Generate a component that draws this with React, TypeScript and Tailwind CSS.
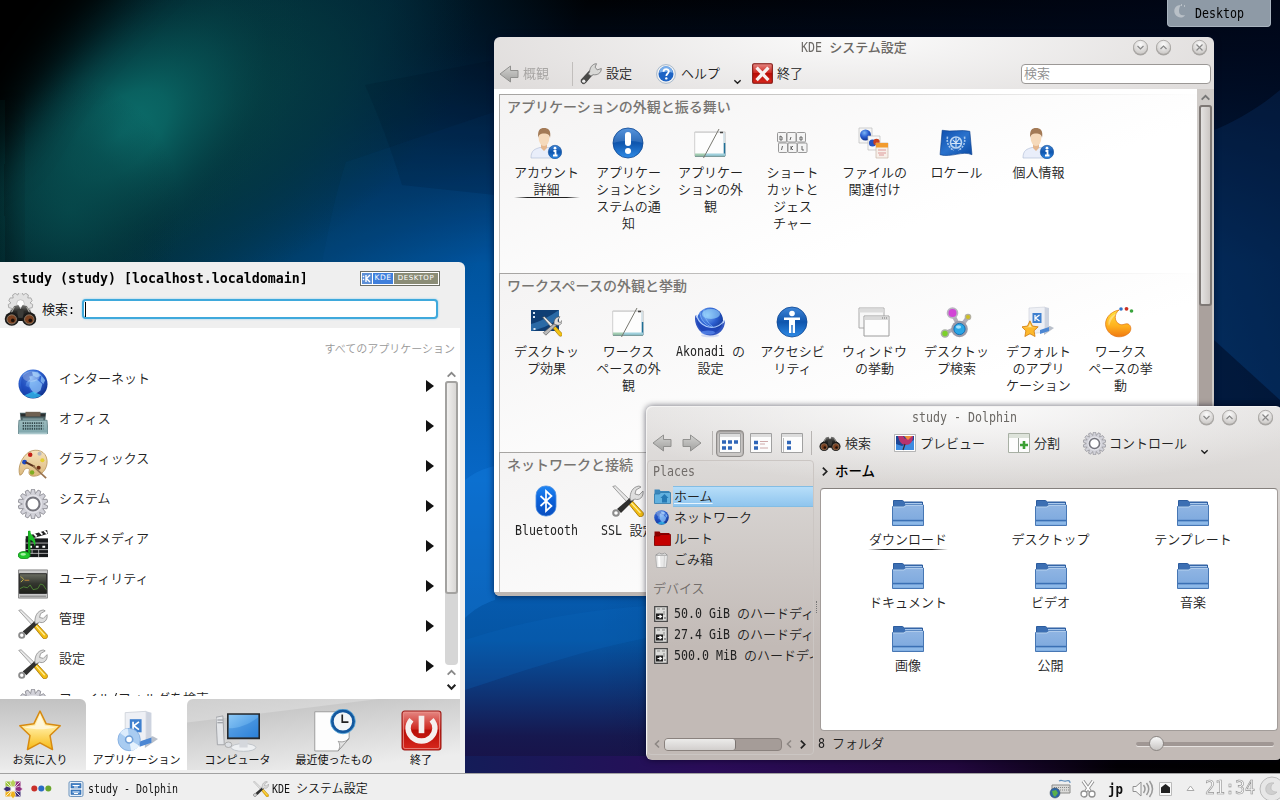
import React from "react";

/* ---------- text ---------- */

const MONO_RATIO = 0.602;

/** Mixed text: half-width runs are condensed to a fixed advance, the rest is left full-width. */
function T({ s, cell = 7, size = 13, className = "" }: { s: string; cell?: number; size?: number; className?: string }) {
  const runs = s.match(/[\x20-\x7e]+|[^\x20-\x7e]+/g) ?? [];
  const mono = size * 1.04;
  return (
    <span className={"inline-flex whitespace-pre " + className} style={{ fontSize: size }}>
      {runs.map((r, i) =>
        /^[\x20-\x7e]/.test(r) ? (
          <span key={i} className="inline-block" style={{ width: r.length * cell }}>
            <span
              className="inline-block origin-left font-['DejaVu_Sans_Mono',monospace]"
              style={{ fontSize: mono, transform: `scaleX(${cell / (mono * MONO_RATIO)})` }}
            >
              {r}
            </span>
          </span>
        ) : (
          <span key={i}>{r}</span>
        ),
      )}
    </span>
  );
}

/* ---------- icons ---------- */

type IconProps = { s?: number };

function Svg({ s = 32, vb = 32, children }: { s?: number; vb?: number; children: React.ReactNode }) {
  return (
    <svg width={s} height={s} viewBox={`0 0 ${vb} ${vb}`} className="block shrink-0">
      {children}
    </svg>
  );
}

function Defs() {
  const lin = (id: string, stops: [number, string][], d = false) => (
    <linearGradient id={id} x1="0" y1="0" x2={d ? "1" : "0"} y2="1">
      {stops.map(([o, c], i) => (
        <stop key={i} offset={o} stopColor={c} />
      ))}
    </linearGradient>
  );
  return (
    <svg width="0" height="0" className="absolute">
      <defs>
        {lin("gBlue", [[0, "#3f86d8"], [0.5, "#0f55ad"], [1, "#2f8be6"]])}
        {lin("gFolder", [[0, "#90b5e3"], [1, "#7aa7dd"]])}
        {lin("gRed", [[0, "#e58a86"], [0.45, "#cf2a22"], [0.5, "#b80d06"], [1, "#d8281e"]])}
        {lin("gStar", [[0, "#fff6cf"], [0.5, "#ffe58a"], [1, "#f6b912"]])}
        {lin("gOrange", [[0, "#ffe23e"], [0.6, "#ffb01e"], [1, "#f07a12"]])}
        {lin("gGray", [[0, "#f4f4f4"], [1, "#a5a5a5"]])}
        {lin("gArrow", [[0, "#cfcfcd"], [1, "#929290"]])}
        {lin("gScreen", [[0, "#8cc8f6"], [1, "#3187dc"]], true)}
        {lin("gTerm", [[0, "#6a6d62"], [0.5, "#33362e"], [1, "#1e201a"]])}
        {lin("gBt", [[0, "#1f86f4"], [0.5, "#0a5fd8"], [1, "#0a4fc0"]])}
        {lin("gFlag", [[0, "#0f4fae"], [0.5, "#2a72cc"], [1, "#0b4aa4"]], true)}
        {lin("gPal", [[0, "#f6e3bd"], [1, "#dcb87c"]])}
        {lin("gType", [[0, "#9dbcbf"], [1, "#7ea6ab"]])}
        {lin("gDark", [[0, "#7a7a78"], [0.4, "#2a2a28"], [1, "#111"]])}
        <radialGradient id="gGlobe" cx="0.4" cy="0.3" r="0.75">
          <stop offset="0" stopColor="#7db5f4" />
          <stop offset="0.5" stopColor="#2c5fd0" />
          <stop offset="1" stopColor="#0c2c86" />
        </radialGradient>
        <radialGradient id="gBtn" cx="0.5" cy="0.3" r="0.7">
          <stop offset="0" stopColor="#fbfbfb" />
          <stop offset="1" stopColor="#c9c6c4" />
        </radialGradient>
      </defs>
    </svg>
  );
}

const Globe = ({ s = 32 }: IconProps) => (
  <Svg s={s}>
    <circle cx="16" cy="16" r="15.500" fill="url(#gGlobe)" />
    <path d="M4 9c3-4 7-6 11-6l1 4-4 1 1 3-4 3-1 4 4 2 1 5-4 4c-5-3-7-12-5-20z" fill="#1742b4" opacity=".6" />
    <path d="M15 3l6 0 4 4-5 2-4-2zM13 13l7-2 6 5-2 7-6 4-4-5-2-4zM25 7l4 5-2 4-3-3z" fill="#8fc4f8" opacity=".75" />
    <path d="M7 28c5 4 13 4 18 0l-9-4z" fill="#35c6f2" opacity=".7" />
    <ellipse cx="14" cy="8" rx="9" ry="5.500" fill="#fff" opacity=".25" />
  </Svg>
);

const Typewriter = ({ s = 32 }: IconProps) => (
  <Svg s={s}>
    <path d="M2 4l1 9h26l1-9z" fill="#4d6467" />
    <path d="M3 5h26v3H3z" fill="#2b2f30" />
    <path d="M8 3h16v5H8z" fill="#6f6152" />
    <path d="M5 10h22v3H5z" fill="#869fa1" />
    <path d="M1 12h30l1 14H0z" fill="url(#gType)" stroke="#55777c" strokeWidth=".8" />
    <path d="M5 15h22M5 18h22M5 21h22" stroke="#34494d" strokeWidth="2" strokeDasharray="1.4 1" />
    <path d="M1 25h30v2H1z" fill="#a9c7cb" />
  </Svg>
);

const Palette = ({ s = 32 }: IconProps) => (
  <Svg s={s}>
    <path d="M2 28C-1 20 4 8 12 3c8-4 18-1 19 9 1 9-6 17-14 17-5 0-6-3-5-6 1-2-2-3-4-2-3 2-2 6-6 7z" fill="url(#gPal)" stroke="#b28e54" strokeWidth=".8" />
    <circle cx="13" cy="6" r="2.400" fill="#c32018" />
    <circle cx="23" cy="5" r="2.200" fill="#b9b9b9" />
    <circle cx="26" cy="12" r="2.200" fill="#e3cf31" />
    <circle cx="7" cy="14" r="2.600" fill="#1a48c2" />
    <circle cx="22" cy="20" r="2.200" fill="#6f2c14" />
    <circle cx="15" cy="25" r="2.400" fill="#7fae22" />
    <path d="M8 14l10 5" stroke="#5c3320" strokeWidth="2.200" />
    <path d="M16 18l14 13" stroke="#9a7450" strokeWidth="1.800" />
  </Svg>
);

const teeth = (n: number, r1: number, r2: number, c: number) => {
  let d = "";
  for (let i = 0; i < n; i++) {
    const a = (i / n) * Math.PI * 2;
    const w = Math.PI / n;
    const pts = [[r1, -w], [r2, -w * 0.45], [r2, w * 0.45], [r1, w]];
    pts.forEach(([r, o], k) => {
      d += `${i === 0 && k === 0 ? "M" : "L"}${(c + r * Math.sin(a + o)).toFixed(2)} ${(c - r * Math.cos(a + o)).toFixed(2)}`;
    });
  }
  return d + "Z";
};

const Gear = ({ s = 32 }: IconProps) => (
  <Svg s={s}>
    <path d={teeth(14, 11.4, 15.8, 16)} fill="#d3d3da" stroke="#85858d" strokeWidth=".9" />
    <circle cx="16" cy="16" r="10.500" fill="#e2e2e8" stroke="#c0c0c8" strokeWidth=".6" />
    <circle cx="16" cy="16" r="7" fill="#fff" stroke="#75757d" strokeWidth="2.200" />
  </Svg>
);

const Multimedia = ({ s = 32 }: IconProps) => (
  <Svg s={s}>
    <path d="M8 10h24v20H8z" fill="#17191b" />
    <path d="M8 8l23-7 1 4-23 7z" fill="#222" />
    <path d="M11 7l3 3M17 5l3 3M23 3l3 3M28 2l3 3" stroke="#fff" strokeWidth="2" />
    <path d="M8 15h24M8 22h24M15 22v4M22 22v8M9 26h23" stroke="#d7d7d7" strokeWidth=".8" />
    <path d="M12 19h3M19 19h3M26 19h3" stroke="#fff" strokeWidth="2.200" />
    <path d="M12 2v25" stroke="#12a51c" strokeWidth="2.600" />
    <path d="M12 1c1 6 9 8 6 18-1-5-3-7-6-8z" fill="#1ec22a" />
    <ellipse cx="6.500" cy="28" rx="6.500" ry="4" fill="#20c62c" stroke="#0b7512" strokeWidth=".8" />
    <ellipse cx="5.500" cy="27" rx="3" ry="1.500" fill="#a4f2a4" />
  </Svg>
);

const Terminal = ({ s = 32 }: IconProps) => (
  <Svg s={s}>
    <path d="M.500 1h31v30H.500z" fill="#c9c9c9" stroke="#858585" />
    <path d="M1.500 5h29v21h-29z" fill="url(#gTerm)" stroke="#222" />
    <path d="M3 8l3 3-3 3" stroke="#c3b44a" strokeWidth="1" fill="none" />
    <path d="M7 12h5" stroke="#c98b3a" strokeWidth="1" />
    <path d="M2 21l4-2 4 1 3-3 3 5 5-1 3-5 3 1 3 5" stroke="#4f8436" strokeWidth="1" fill="none" />
    <path d="M2 29h28" stroke="#7a7a7a" />
  </Svg>
);

const Tools = ({ s = 32 }: IconProps) => (
  <Svg s={s}>
    <path d="M.800 1.500l2.500-.7L17 14l-2.500 2.500z" fill="#e8e8e8" stroke="#8a8a8a" strokeWidth=".8" />
    <path d="M16 18l3-3.500 12 13c1.500 2.500-1 5.500-4 4z" fill="#f3bd12" stroke="#9b6c05" strokeWidth=".8" />
    <path d="M18.500 17l10 11" stroke="#fff0a0" strokeWidth="1.200" />
    <path d="M19 12l3 3L9 28l-4-4z" fill="#30302f" />
    <circle cx="4" cy="28" r="2.800" fill="#fff" stroke="#8c8c8c" strokeWidth="2" />
    <path d="M18 14c0-6 2-12 9-13l2 1-5 3-1 4 4 1 4-4c1 6-4 10-8 8l-4 2z" fill="#dedede" stroke="#858585" strokeWidth=".8" />
  </Svg>
);

const Wrench = ({ s = 22 }: IconProps) => (
  <Svg s={s}>
    <path d="M14 11l5 5L8 29c-3 3-8 0-6-5z" fill="#4a4a48" stroke="#222" strokeWidth=".8" />
    <circle cx="5.500" cy="26.500" r="2.400" fill="#eee" />
    <path d="M14 13c0-6 4-12 10-12l-2 5 3 4 6-2c0 7-6 10-12 9l-3 2-4-3z" fill="#d8d8d6" stroke="#666" strokeWidth="1" />
  </Svg>
);

const STAR = "M16 1.500l4.500 9.300 10.200 1.400-7.400 7.100 1.800 10.200L16 24.600l-9.100 4.900 1.800-10.200-7.400-7.100 10.200-1.400z";

const Star = ({ s = 44 }: IconProps) => (
  <Svg s={s}>
    <path d={STAR} fill="url(#gStar)" stroke="#d78a10" strokeWidth="1.100" strokeLinejoin="round" />
    <path d="M16 4.500l3.500 7.500 8 1.200c-8 2-15 2-23 0l8-1.200z" fill="#fff" opacity=".6" />
  </Svg>
);

const AppBox = ({ s = 44, star = false }: IconProps & { star?: boolean }) => (
  <Svg s={s}>
    <path d="M22 29l10-7-4-2-6 1z" fill="#9aa4b4" opacity=".7" />
    <path d="M7 2l16-1v25L7 28z" fill="#eef0f5" stroke="#c9ced8" strokeWidth=".6" />
    <path d="M23 1l4 1v22l-4 3z" fill="#cdd3df" />
    <path d="M10.500 7h9v10h-9z" fill="#3f80cf" />
    <path d="M13 9v6M17.500 9l-4 3 4 3" stroke="#fff" strokeWidth="1.300" fill="none" />
    <path d="M18 24l9-3v4l-9 3z" fill="#4c87d3" />
    {star ? (
      <g transform="translate(-1 14) scale(.56)">
        <path d={STAR} fill="#fdb92c" stroke="#d07a0c" strokeWidth="1.400" strokeLinejoin="round" />
        <path d="M16 6l3 6 8 1H5l8-1z" fill="#ffe69a" />
      </g>
    ) : (
      <g>
        <circle cx="10" cy="22.500" r="8.500" fill="#a9ccf1" stroke="#7ba7dc" strokeWidth=".6" />
        <path d="M10 22.500L3 17.500a8.500 8.500 0 0 1 6-3.400z" fill="#dcecfc" />
        <path d="M10 22.500l7.500 4.500a8.500 8.500 0 0 1-6 4z" fill="#e6f2fd" />
        <circle cx="10" cy="22.500" r="2.700" fill="#fff" stroke="#6f9fd8" strokeWidth="1.200" />
      </g>
    )}
  </Svg>
);

const Computer = ({ s = 44 }: IconProps) => (
  <Svg s={s}>
    <path d="M0 6l5-1 1 21H1z" fill="#e3e5e8" stroke="#9a9da2" strokeWidth=".6" />
    <path d="M1 8h4M1 10h4" stroke="#8a8d92" strokeWidth=".7" />
    <ellipse cx="20" cy="28" rx="9" ry="2.800" fill="#eef0f2" stroke="#b9bdc3" strokeWidth=".6" />
    <path d="M17 22h6v6h-6z" fill="#d4d7dc" />
    <path d="M8 3h24v19H8z" fill="#26282b" />
    <path d="M9.200 4.200h21.600v16.400H9.200z" fill="url(#gScreen)" />
    <path d="M9.200 14c8 0 15-3 21.600-8v14.600H9.200z" fill="#1f74cf" opacity=".35" />
    <ellipse cx="9" cy="26" rx="2.500" ry="2" fill="#dcdfe3" stroke="#999" strokeWidth=".5" />
  </Svg>
);

const Recent = ({ s = 44 }: IconProps) => (
  <Svg s={s}>
    <path d="M2 2h25v19l-8 9.500H2z" fill="#fdfdfd" stroke="#9a9a9a" strokeWidth=".7" />
    <path d="M19 30.500c2-3 1-6 0-7 3 1 6 0 8-2z" fill="#e3e3e3" stroke="#8f8f8f" strokeWidth=".6" />
    <circle cx="22.500" cy="9" r="7.800" fill="#f3f6f8" stroke="#14589e" strokeWidth="2.200" />
    <circle cx="22.500" cy="9" r="9" fill="none" stroke="#4fa3d8" strokeWidth=".6" />
    <path d="M22 4v5.500h4.500" stroke="#222" strokeWidth="1.200" fill="none" />
  </Svg>
);

const Power = ({ s = 44 }: IconProps) => (
  <Svg s={s}>
    <rect x="1.500" y="1.500" width="29" height="29" rx="2" fill="url(#gRed)" stroke="#9d1d18" strokeWidth=".8" />
    <rect x="2.600" y="2.600" width="26.800" height="26.800" rx="1.200" fill="none" stroke="#eb8f88" strokeWidth=".6" />
    <path d="M8.500 8a10 9.500 0 1 0 15 0" fill="none" stroke="#f5efee" strokeWidth="4" />
    <path d="M16 5v13" stroke="#f5efee" strokeWidth="4.200" />
  </Svg>
);

const BINO = (
  <g>
    <path d="M4 18l6-9 4-1 2 4 2-4 4 1 6 9-3 6H7z" fill="url(#gDark)" />
    <path d="M13 12h6v9h-6z" fill="#3b3b38" />
    <path d="M10 10l-3 6M22 10l3 6" stroke="#a5a5a0" strokeWidth="1.200" />
    <circle cx="7.500" cy="22" r="6.800" fill="#1b1a19" />
    <circle cx="24.500" cy="22" r="6.800" fill="#1b1a19" />
    <circle cx="7.500" cy="22.500" r="4.600" fill="#7a4020" stroke="#8f7f6c" strokeWidth=".9" />
    <circle cx="24.500" cy="22.500" r="4.600" fill="#7a4020" stroke="#8f7f6c" strokeWidth=".9" />
    <circle cx="8.500" cy="23.500" r="1.800" fill="#1d0f08" />
    <circle cx="25.500" cy="23.500" r="1.800" fill="#1d0f08" />
  </g>
);

const Binoculars = ({ s = 22 }: IconProps) => (
  <Svg s={s}>
    <g transform="translate(0 -1)">{BINO}</g>
  </Svg>
);

const GearBino = ({ s = 34 }: IconProps) => (
  <Svg s={s}>
    <g transform="translate(4 -1) scale(.75)">
      <path d={teeth(11, 12.5, 15.8, 16)} fill="#e2e2e2" stroke="#9a9a9a" />
      <circle cx="16" cy="15" r="5" fill="#fff" stroke="#bbb" />
    </g>
    <g transform="translate(0 4) scale(1 .96)">{BINO}</g>
  </Svg>
);

const User = ({ s = 32 }: IconProps) => (
  <Svg s={s}>
    <path d="M1 31c0-8 4-9 9-10.500h8c5 1.500 8 4 8 10.500z" fill="#e9eefa" stroke="#b6c1d8" strokeWidth=".7" />
    <path d="M11 16h6v5l-3 3-3-3z" fill="#e5b78e" />
    <ellipse cx="14" cy="11.500" rx="5.300" ry="7.500" fill="#f6dabb" />
    <path d="M8.200 11C7.500 3 10 1 14 1s7.500 2 6 10C19.500 7.500 17.500 6.500 14 6.500S9 7.500 8.200 11z" fill="#a37a56" />
    <circle cx="25" cy="25" r="6.700" fill="url(#gBlue)" stroke="#0b4a96" strokeWidth=".6" />
    <path d="M23.500 24h2v4.500M23 28.500h4.500" stroke="#fff" strokeWidth="1.800" fill="none" />
    <circle cx="25" cy="21.200" r="1.400" fill="#fff" />
  </Svg>
);

const Alert = ({ s = 32 }: IconProps) => (
  <Svg s={s}>
    <circle cx="16" cy="16" r="15" fill="url(#gBlue)" stroke="#0d4590" strokeWidth=".8" />
    <path d="M1.500 16a14.500 14.500 0 0 1 29 0c-9-3-20-3-29 0z" fill="#fff" opacity=".12" />
    <rect x="13" y="5" width="6" height="14" rx="3" fill="#fff" />
    <circle cx="16" cy="24" r="3" fill="#fff" />
  </Svg>
);

const Look = ({ s = 32 }: IconProps) => (
  <Svg s={s}>
    <path d="M.700 5h30.600v24H.700z" fill="#fdfdfd" stroke="#c4c4c4" strokeWidth=".8" />
    <path d="M1 4.500h30v1.500H1z" fill="#d5d5d5" />
    <path d="M30.500 16v13" stroke="#1f6f96" strokeWidth="1.600" />
    <path d="M30 6v10" stroke="#b5cdd8" strokeWidth="1" />
    <path d="M11 28h20" stroke="#9fd0dc" strokeWidth="3" />
    <path d="M1 28h10" stroke="#a3cdb2" strokeWidth="3" />
    <path d="M1 29.300h30" stroke="#567a78" strokeWidth=".8" />
    <path d="M26 5.500h3" stroke="#444" strokeWidth="1.600" />
    <path d="M25 2L9.500 31" stroke="#77776f" strokeWidth="1" />
  </Svg>
);

const Keys = ({ s = 32 }: IconProps) => (
  <Svg s={s}>
    <g fill="#f4f4f4" stroke="#8c8c8c" strokeWidth=".9">
      <rect x="1.500" y="5.500" width="9" height="9.500" rx="1" />
      <rect x="11" y="5.500" width="9" height="9.500" rx="1" />
      <rect x="20.500" y="5.500" width="9" height="9.500" rx="1" />
      <rect x="2.500" y="16" width="9" height="9.500" rx="1" />
      <rect x="12" y="16" width="9" height="9.500" rx="1" />
      <rect x="21.500" y="16" width="9.500" height="9.500" rx="1" />
    </g>
    <path d="M4 9v4h2v-3zM15 10l-1 3M24 10h2v3h-2zM6.500 19l-1 4M15 19v4M17 19l-2 2 2 2M26 19v4h2" stroke="#555" strokeWidth=".9" fill="none" />
  </Svg>
);

const FileTypes = ({ s = 32 }: IconProps) => (
  <Svg s={s}>
    <path d="M1 1h13v15H1z" fill="#f6f6f6" stroke="#bcbcbc" strokeWidth=".7" />
    <circle cx="7.500" cy="8" r="5.500" fill="url(#gGlobe)" />
    <path d="M10 9h12v14H10z" fill="#f9f9f9" stroke="#bcbcbc" strokeWidth=".7" />
    <circle cx="14.500" cy="16" r="3.600" fill="#2752c2" />
    <circle cx="18.500" cy="15" r="3.200" fill="#c93f20" />
    <path d="M18 16h12v15H18z" fill="#f7efe9" stroke="#c8b8aa" strokeWidth=".7" />
    <path d="M18 16h12v4.500H18z" fill="#f29b2e" />
    <path d="M20 23h8M20 26h8M21 28h5" stroke="#dd9a9a" strokeWidth="1.200" />
  </Svg>
);

const Flag = ({ s = 34 }: IconProps) => (
  <Svg s={s}>
    <path d="M3 4c9 2 18-1 26 1l2 22c-9-4-19 3-30 0z" fill="url(#gFlag)" stroke="#0a3f8d" strokeWidth=".6" />
    <circle cx="16" cy="15.500" r="5.200" fill="none" stroke="#bcd6f3" strokeWidth="1.500" />
    <path d="M13 13l3 3 3-4M16 11v9M11.500 16.500h9" stroke="#d4e5f8" strokeWidth="1" fill="none" />
    <path d="M8 10c-1 6 1 10 6 13M24 10c1 6-1 10-6 13" stroke="#a9c9ee" strokeWidth="1.500" fill="none" strokeDasharray="2 1" />
  </Svg>
);

const Effects = ({ s = 32 }: IconProps) => (
  <Svg s={s}>
    <path d="M1 4h28v21H1z" fill="#0f3e74" />
    <path d="M1 18C10 16 20 10 29 4v8C20 20 10 23 1 25z" fill="#2a6aa6" />
    <path d="M3 7h2M3 11h2M3.500 23h2" stroke="#d7e5f3" strokeWidth="2" />
    <g transform="translate(12 10) scale(.64)">
      <path d="M1 2l3-1 13 13-3 3z" fill="#e8e8e8" stroke="#555" />
      <path d="M16 18l3-4 12 13c2 3-1 6-4 4z" fill="#f3c312" stroke="#9b6c05" />
      <path d="M20 11l3 3L6 30l-4-4z" fill="#b9b9b9" stroke="#555" />
      <path d="M19 13c-1-6 2-12 9-12l-3 5v3l4 1 3-4c0 6-5 10-9 8z" fill="#dedede" stroke="#555" />
    </g>
  </Svg>
);

const Akonadi = ({ s = 32 }: IconProps) => (
  <Svg s={s}>
    <ellipse cx="16" cy="29.500" rx="9" ry="1.800" fill="#d3dbf2" />
    <circle cx="16" cy="14.500" r="13" fill="url(#gGlobe)" />
    <path d="M1.500 9C-1 18 6 29.500 16 29.500c9 0 15-6 15-15-4 7-9 9.500-16 7C8 18.500 4 15 1.500 9z" fill="#1f46bb" opacity=".92" />
    <path d="M2.500 9c2 8 9 12.500 15 12.500 6 0 10-3 13-7.500" stroke="#a9c8fb" strokeWidth="1.200" fill="none" />
    <path d="M6 6c0 7 5 13 12 15M10 3c-1 6 3 14 9 18" stroke="#7fb4fa" strokeWidth=".8" fill="none" />
    <ellipse cx="17" cy="8" rx="9" ry="5" fill="#a6e3ff" opacity=".55" />
    <ellipse cx="14" cy="26.500" rx="7" ry="2" fill="#5d8df0" opacity=".7" />
  </Svg>
);

const Access = ({ s = 32 }: IconProps) => (
  <Svg s={s}>
    <circle cx="16" cy="16" r="15" fill="url(#gBlue)" stroke="#0d4590" strokeWidth=".8" />
    <circle cx="16" cy="7.500" r="2.800" fill="#fff" />
    <path d="M8 11.500h16v2.500h-5v13h-2.300v-8h-1.400v8H13V14H8z" fill="#fff" />
  </Svg>
);

const Wins = ({ s = 32 }: IconProps) => (
  <Svg s={s}>
    <path d="M1 2h25v20H1z" fill="#f7f7f7" stroke="#aaa" />
    <path d="M1.500 2.500h24v4h-24z" fill="#dcdcdc" />
    <path d="M6 10h25v20H6z" fill="#fdfdfd" stroke="#9c9c9c" />
    <path d="M6.500 10.500h24v3.500h-24z" fill="#dadada" />
    <path d="M24 12h5" stroke="#777" strokeDasharray="1 1" />
  </Svg>
);

const Molecule = ({ s = 32 }: IconProps) => (
  <Svg s={s}>
    <path d="M12 7l8 15 8-11M5 27l14-6" stroke="#b1adb8" strokeWidth="4" fill="none" />
    <circle cx="12.500" cy="7" r="5.800" fill="#b9b4c0" />
    <circle cx="12.500" cy="7" r="4" fill="#d243d6" />
    <circle cx="28" cy="11" r="3.300" fill="#b4b0a0" />
    <circle cx="28" cy="11" r="2" fill="#cfc021" />
    <circle cx="19.500" cy="23" r="8.300" fill="#9a9aa8" />
    <circle cx="19.500" cy="23" r="5.600" fill="#2aa6e6" stroke="#1571b6" />
    <circle cx="5" cy="27.500" r="4.300" fill="#aab0a4" />
    <circle cx="5" cy="27.500" r="2.700" fill="#7bd129" />
    <ellipse cx="18.500" cy="21" rx="2.600" ry="1.800" fill="#a6e0fb" />
  </Svg>
);

const Crescent = ({ s = 32 }: IconProps) => (
  <Svg s={s}>
    <path d="M15 4C5 6 0 14 2 21c3 10 15 13 23 6 3-3 2-8-1-9-3-1-5 2-9 0-5-3-5-10 0-14z" fill="url(#gOrange)" stroke="#e0700f" strokeWidth=".7" />
    <path d="M13 7C6 10 3 15 5 20c2-6 4-9 8-13z" fill="#fff" opacity=".35" />
    <circle cx="17" cy="3" r="1.800" fill="#2e72c9" />
    <circle cx="22.500" cy="2.800" r="1.900" fill="#cc2f22" />
    <circle cx="27.500" cy="5" r="1.800" fill="#3aa43e" />
  </Svg>
);

const Bluetooth = ({ s = 32 }: IconProps) => (
  <Svg s={s}>
    <rect x="6" y="1" width="20" height="30" rx="9.500" fill="url(#gBt)" stroke="#4b8de0" strokeWidth=".8" />
    <path d="M10.500 11l11 10-5.500 5V6l5.500 5-11 10" stroke="#fff" strokeWidth="1.700" fill="none" />
  </Svg>
);

const Help = ({ s = 20 }: IconProps) => (
  <Svg s={s}>
    <circle cx="16" cy="16" r="15" fill="#f3f3f3" stroke="#7a96b5" />
    <circle cx="16" cy="16" r="12" fill="#1d63c4" />
    <path d="M5 14a11 11 0 0 1 22 0c-7-2-15-2-22 0z" fill="#77acea" />
    <path d="M12 12.500c0-5.500 8.500-5.500 8.500-.5 0 3-4 3.500-4 7" stroke="#fff" strokeWidth="2.800" fill="none" />
    <circle cx="16.500" cy="23" r="1.900" fill="#fff" />
  </Svg>
);

const Quit = ({ s = 20 }: IconProps) => (
  <Svg s={s}>
    <rect x="1" y="1" width="30" height="30" rx="2" fill="url(#gRed)" stroke="#7f120d" strokeWidth="1.600" />
    <path d="M7 7l18 19M25 7L7 26" stroke="#f7f1f0" strokeWidth="5" />
  </Svg>
);

const Arrow = ({ flip = false }: { flip?: boolean }) => (
  <svg width="20" height="18" viewBox="0 0 20 18" className={flip ? "block -scale-x-100" : "block"}>
    <path d="M1 9l10.500-8v4.500H19v7h-7.500V17z" fill="url(#gArrow)" stroke="#7d7d7b" strokeWidth="1" />
  </svg>
);

const Folder = () => (
  <svg width="34" height="28" viewBox="0 0 34 28" className="block">
    <path d="M2.500 1.500h9l2 1.500h18v7h-29z" fill="#3c6fb3" stroke="#2c5c9e" />
    <path d="M14 4h17v1.500H14z" fill="#a9c8ec" />
    <path d="M1.500 7.500h11l2-1.500h18v20.500h-31z" fill="url(#gFolder)" stroke="#4777b4" />
    <path d="M2 21.500h30" stroke="#3a70b4" strokeWidth="1.400" />
    <path d="M2 23h30v2.500H2z" fill="#8db9e8" />
    <path d="M2 8h11l2-1.500h17" stroke="#c2d9f2" strokeWidth=".8" fill="none" />
  </svg>
);

const SmallFolder = ({ red = false }: { red?: boolean }) => (
  <svg width="17" height="15" viewBox="0 0 17 15" className="block shrink-0">
    <path d="M.5.5h5l1 1.500h9v12h-15z" fill={red ? "#8b0000" : "#3a86bb"} />
    <path d="M.5 5h5l1-1.500h10v11H.5z" fill={red ? "#c40000" : "#62b1df"} stroke={red ? "#7c0000" : "#2f78ab"} strokeWidth=".8" />
    {!red && <path d="M8 13.500V9H6.500L10.500 5l4 4H13v4.500z" fill="#2579b4" />}
  </svg>
);

const Trash = () => (
  <svg width="15" height="16" viewBox="0 0 15 16" className="block shrink-0">
    <path d="M1.500 3h12l-1.200 12.500H2.700z" fill="#e9e9e9" stroke="#a9a9a9" strokeWidth=".8" />
    <path d="M5 4l.5 11" stroke="#fff" strokeWidth="2" />
    <path d="M10.500 4L10 15" stroke="#d0d0d0" />
    <path d="M2 3l3-2 3 1 3-1 2 2z" fill="#fff" stroke="#888" strokeWidth=".7" />
  </svg>
);

const Disk = () => (
  <svg width="14" height="16" viewBox="0 0 14 16" className="block shrink-0">
    <path d="M.7.7h12.600v14.600H.7z" fill="#dcdcda" stroke="#4b4b4b" strokeWidth="1.300" />
    <path d="M3 3h3M8 3h3M10 5v4" stroke="#8a8a88" />
    <path d="M2 7.500h7v6H2z" fill="#1f1f1f" />
    <path d="M3.500 10.500h3M5.500 9l2 1.500-2 1.500" stroke="#fff" strokeWidth="1.200" fill="none" />
    <path d="M10 12h2" stroke="#555" />
  </svg>
);

const ViewIcon = ({ kind }: { kind: number }) => (
  <svg width="22" height="20" viewBox="0 0 22 20" className="block">
    <path d="M.5.5h21v19H.5z" fill="#fcfcfc" stroke="#a0a0a0" />
    <path d="M1 1h20v3H1z" fill="#dcdcdc" />
    {kind === 0 && <path d="M3 9h4M9 9h4M15 9h4M3 15h4M9 15h4" stroke="#2f66b8" strokeWidth="3.400" />}
    {kind === 1 && (
      <g>
        <path d="M4 9.500h4M4 15h4" stroke="#2f66b8" strokeWidth="3.400" />
        <path d="M10 8.500h8M10 11h5M10 15h8" stroke="#c9a0a0" strokeWidth=".9" />
      </g>
    )}
    {kind === 2 && <path d="M6 9.500h4M6 15h4" stroke="#2f66b8" strokeWidth="3.400" />}
    {kind === 2 && <path d="M2.500 5v14" stroke="#bbb" />}
  </svg>
);

const Preview = () => (
  <svg width="22" height="18" viewBox="0 0 22 18" className="block">
    <path d="M.5.5h21v17H.5z" fill="#fff" stroke="#999" strokeWidth=".7" />
    <path d="M2 2h18v14H2z" fill="#1d4796" />
    <path d="M2 10l6 2 12-6v10H2z" fill="#3d8be0" />
    <path d="M4 2h5l2 3 3-3h5c0 6-3 9-7 9S5 8 4 2z" fill="#b8336f" />
    <path d="M10 2l4 4 4-4z" fill="#ef8e3a" />
    <path d="M11 10l-2 6" stroke="#3c2a2a" strokeWidth="1.200" />
  </svg>
);

const Split = () => (
  <svg width="22" height="20" viewBox="0 0 22 20" className="block">
    <path d="M.5.5h21v19H.5z" fill="#fdfdfd" stroke="#a8b0a4" />
    <path d="M1 1h20v4H1z" fill="#dde3da" />
    <path d="M10.500 5v14" stroke="#9aa39a" />
    <path d="M16 8v8M12 12h8" stroke="#3ba034" strokeWidth="2.600" />
  </svg>
);

const Pinwheel = () => (
  <Svg s={20}>
    <g transform="translate(16 16)">
      {["#8f2f7e", "#3c2b76", "#efb21e", "#9bc33c"].map((c, i) => (
        <rect key={c} x={i === 0 || i === 1 ? 2 : -12} y={i === 0 || i === 3 ? -12 : 2} width="10" height="10" fill={c} />
      ))}
      {["#b5cf5a", "#8f2f7e", "#efb21e", "#3c2b76"].map((c, i) => (
        <path key={c} transform={`rotate(${i * 90})`} d="M0-15.500l4.500 5-2 7h-5l-2-7z" fill={c} stroke="#fff" strokeWidth="1" />
      ))}
      <path d="M-11-11L11 11M11-11L-11 11" stroke="#fff" strokeWidth="1.300" />
    </g>
  </Svg>
);

const Cabinet = () => (
  <Svg s={16}>
    <rect x="2" y="1" width="28" height="30" rx="3" fill="#e9f1fa" stroke="#6b93bd" strokeWidth="2" />
    <path d="M6 5h20v9H6zM6 18h20v9H6z" fill="#3f7fc6" stroke="#29619f" />
    <path d="M9 9h14M9 22h14" stroke="#fff" strokeWidth="2" />
    <path d="M12 12h8M12 25h8" stroke="#fff" strokeWidth="2" />
  </Svg>
);

const Chev = ({ dir = "d", c = "#777", w = 10, sw = 1.6 }: { dir?: "u" | "d" | "l" | "r"; c?: string; w?: number; sw?: number }) => {
  const d = { u: "M1.500 7L5 3.500 8.500 7", d: "M1.500 3.500L5 7l3.500-3.500", l: "M7 1.500L3.500 5 7 8.500", r: "M3.500 1.500L7 5 3.500 8.500" }[dir];
  return (
    <svg width={w} height={w} viewBox="0 0 10 10" className="block shrink-0">
      <path d={d} stroke={c} strokeWidth={sw} fill="none" />
    </svg>
  );
};

/* ---------- window chrome ---------- */

function WinButton({ kind }: { kind: "min" | "max" | "close" }) {
  return (
    <svg width="17" height="17" viewBox="0 0 17 17" className="block">
      <circle cx="8.500" cy="9" r="7.500" fill="#8d8a88" opacity=".7" />
      <circle cx="8.500" cy="8.300" r="7" fill="url(#gBtn)" stroke="#a5a2a0" strokeWidth=".8" />
      <path
        d={kind === "min" ? "M5.500 7l3 3 3-3" : kind === "max" ? "M5.500 10l3-3 3 3" : "M5.500 5.500l6 6M11.500 5.500l-6 6"}
        stroke="#888"
        strokeWidth="1.200"
        fill="none"
      />
    </svg>
  );
}

function TitleBar({ title, pr }: { title: string; pr: string }) {
  return (
    <div className="relative flex h-[22px] shrink-0 items-center justify-center text-[#6b6864]">
      <T s={title} className="-mt-0.5 font-medium" />
      <div className={"absolute inset-y-0 right-0 flex items-center pb-px " + pr}>
        <WinButton kind="min" />
        <span className="w-1.5" />
        <WinButton kind="max" />
        <span className="w-[19px]" />
        <WinButton kind="close" />
      </div>
    </div>
  );
}

/* ---------- launcher ---------- */

const menu: [string, (p: IconProps) => React.ReactElement][] = [
  ["インターネット", Globe],
  ["オフィス", Typewriter],
  ["グラフィックス", Palette],
  ["システム", Gear],
  ["マルチメディア", Multimedia],
  ["ユーティリティ", Terminal],
  ["管理", Tools],
  ["設定", Tools],
  ["ファイル/フォルダを検索", Gear],
];

function Launcher() {
  return (
    <div className="absolute left-0 top-[262px] flex h-[511px] w-[465px] flex-col rounded-tr-md bg-[#efefef]">
      <div className="flex h-[66px] shrink-0 flex-col">
        <div className="flex h-[32px] items-center pl-3 pr-[25px]">
          <T s="study (study) [localhost.localdomain]" cell={8} size={14} className="-mt-0.5 font-bold text-black" />
          <div className="ml-auto flex h-[15px] w-[80px] items-center border border-[#6d6f66] bg-white p-px font-['DejaVu_Sans',sans-serif] text-[7.5px] font-normal leading-none text-white">
            <svg width="10" height="11" viewBox="0 0 10 11" className="block bg-[#5d8fd6]">
              <path d="M4 2v7M8 2L4.500 5.500 8 9M1 3l1 1M1 7l1-1" stroke="#fff" strokeWidth="1.400" fill="none" />
            </svg>
            <span className="flex h-full w-[21px] items-center justify-center border-l border-white bg-[#3f7fdc] tracking-[0.500px]">KDE</span>
            <span className="flex h-full flex-1 items-center justify-center border-l border-white bg-[#8b8d77] text-[7px] tracking-[0.600px]">DESKTOP</span>
          </div>
        </div>
        <div className="flex h-[30px] items-center pl-1">
          <GearBino s={33} />
          <span className="ml-[5px] w-[40px] text-black">
            <T s="検索:" className="-mt-px" />
          </span>
          <div className="flex h-[20px] w-[356px] items-center rounded border-2 border-[#3fa9dc] bg-white pl-px shadow-[0_0_2px_#7cc8ee]">
            <span className="h-[15px] w-px bg-black" />
          </div>
        </div>
      </div>
      <div className="flex h-[371px] w-[460px] shrink-0 flex-col overflow-hidden bg-white">
        <div className="flex h-[36px] shrink-0 items-center justify-end pr-[5px] pt-[3px] text-[#989898]">
          <T s="すべてのアプリケーション" size={11} cell={6} />
        </div>
        <div className="flex h-[332px]">
          <div className="flex flex-1 flex-col overflow-hidden">
            {menu.map(([label, Icon]) => (
              <div key={label} className="flex h-10 shrink-0 items-center pl-[18px] pr-[10px]">
                <Icon s={30} />
                <span className="-mt-3 ml-[11px] text-[#222]">
                  <T s={label} />
                </span>
                <svg width="8" height="12" viewBox="0 0 8 12" className="ml-auto mt-1 block">
                  <path d="M0 0l8 6-8 6z" fill="#111" />
                </svg>
              </div>
            ))}
          </div>
          <div className="flex w-[15px] flex-col items-center pt-[5px]">
            <Chev dir="u" c="#888" w={11} />
            <div className="mt-px h-[284px] w-[13px] shrink-0 rounded bg-[#d6d6d6]">
              <div className="h-[213px] w-[13px] rounded-[3px] border-2 border-[#a3a2a0] bg-gradient-to-r from-[#f0efee] to-[#d9d7d5]" />
            </div>
            <div className="flex flex-col gap-[3px] pt-0.5">
              <Chev dir="u" c="#888" w={11} />
              <Chev dir="d" c="#222" w={11} sw={1.9} />
            </div>
          </div>
          <span className="w-px" />
        </div>
      </div>
      <div className="flex h-[71px] w-[460px] items-start bg-white">
        <Tab label="お気に入り" w="w-[86px] rounded-tr-md bg-gradient-to-b from-[#c2c2c2] to-[#ececec] pr-[6px]" icon={<Star s={44} />} />
        <Tab label="アプリケーション" w="w-[101px]" icon={<AppBox s={42} />} />
        <div className="flex h-[71px] flex-1 rounded-tl-md bg-[linear-gradient(173deg,#cfcfcf_0%,#d6d6d6_22%,#c9c9c9_23%,#ededed_85%)]">
          <Tab label="コンピュータ" w="w-[101px]" icon={<Computer s={44} />} />
          <Tab label="最近使ったもの" w="w-[92px]" icon={<Recent s={44} />} />
          <Tab label="終了" w="w-[80px] pl-0.5" icon={<Power s={43} />} />
        </div>
      </div>
    </div>
  );
}

function Tab({ label, w, icon }: { label: string; w: string; icon: React.ReactNode }) {
  return (
    <div className={"flex h-[71px] flex-col items-center pt-2.5 text-[#111] " + w}>
      <div className="flex h-[43px] items-center">{icon}</div>
      <span className="font-normal leading-[14px]">
        <T s={label} size={11} cell={6} />
      </span>
    </div>
  );
}

/* ---------- system settings ---------- */

type Entry = { lines: string[]; icon: React.ReactNode; current?: boolean };

const groups: { title: string; items: Entry[] }[] = [
  {
    title: "アプリケーションの外観と振る舞い",
    items: [
      { lines: ["アカウント", "詳細"], icon: <User />, current: true },
      { lines: ["アプリケー", "ションとシ", "ステムの通", "知"], icon: <Alert /> },
      { lines: ["アプリケー", "ションの外", "観"], icon: <Look /> },
      { lines: ["ショート", "カットと", "ジェス", "チャー"], icon: <Keys /> },
      { lines: ["ファイルの", "関連付け"], icon: <FileTypes /> },
      { lines: ["ロケール"], icon: <Flag /> },
      { lines: ["個人情報"], icon: <User /> },
    ],
  },
  {
    title: "ワークスペースの外観と挙動",
    items: [
      { lines: ["デスクトッ", "プ効果"], icon: <Effects /> },
      { lines: ["ワークス", "ペースの外", "観"], icon: <Look /> },
      { lines: ["Akonadi の", "設定"], icon: <Akonadi /> },
      { lines: ["アクセシビ", "リティ"], icon: <Access /> },
      { lines: ["ウィンドウ", "の挙動"], icon: <Wins /> },
      { lines: ["デスクトッ", "プ検索"], icon: <Molecule /> },
      { lines: ["デフォルト", "のアプリ", "ケーション"], icon: <AppBox s={32} star /> },
      { lines: ["ワークス", "ペースの挙", "動"], icon: <Crescent /> },
    ],
  },
  {
    title: "ネットワークと接続",
    items: [
      { lines: ["Bluetooth"], icon: <Bluetooth /> },
      { lines: ["SSL 設定"], icon: <Tools /> },
    ],
  },
];

const Underline = ({ w }: { w: string }) => (
  <span className={"block h-px bg-[linear-gradient(90deg,transparent,#222_20%,#222_80%,transparent)] " + w} />
);

function Settings() {
  return (
    <div className="absolute left-[494px] top-[37px] flex h-[559px] w-[720px] flex-col overflow-hidden rounded-md bg-[radial-gradient(ellipse_420px_90px_at_50%_0,#fbfbfb,#dfdcdb)] shadow-[0_0_6px_rgba(0,10,40,.7)]">
      <TitleBar title="KDE システム設定" pr="pr-1.5" />
      <div className="flex h-[30px] shrink-0 items-center pb-px pl-[5px] pr-[3px] text-[#222]">
        <div className="flex w-[73px] items-center gap-1 text-[#9a9896] opacity-80">
          <Arrow />
          <T s="概観" className="-mt-px font-normal" />
        </div>
        <span className="h-6 w-px bg-[#c1bebc]" />
        <div className="flex w-[83px] items-center gap-1 pl-[7px]">
          <Wrench s={22} />
          <T s="設定" className="-mt-px" />
        </div>
        <div className="flex w-[77px] items-center gap-[5px]">
          <Help />
          <T s="ヘルプ" className="-mt-px" />
        </div>
        <div className="w-4 pt-4">
          <Chev c="#222" w={9} />
        </div>
        <div className="flex items-center gap-1 pl-[3px]">
          <Quit s={21} />
          <T s="終了" className="-mt-px" />
        </div>
        <div className="ml-auto flex h-5 w-[190px] items-center rounded border border-[#9b9896] bg-white pl-0.5 text-[#8e8e8e]">
          <T s="検索" className="-mt-px" />
        </div>
      </div>
      <div className="flex flex-1 overflow-hidden">
        <div className="flex flex-1 flex-col overflow-hidden bg-white pl-[5px] pt-[5px]">
          {groups.map((g) => (
            <div
              key={g.title}
              className="h-[179px] shrink-0 rounded-tl border-l border-t border-[#b9b7b5] bg-[linear-gradient(160deg,#f4f3f3,#fff_65%)] [border-image:linear-gradient(150deg,#a5a3a1,#fff_70%)_1]"
            >
              <div className="flex h-[24px] items-center pb-0.5 pl-[7px] font-medium text-[#777572]">
                <T s={g.title} size={14} />
              </div>
              <div className="flex pl-[5px]">
                {g.items.map((it, i) => (
                  <div key={i} className="flex w-[82px] shrink-0 flex-col items-center pt-2 text-[#222]">
                    <div className="flex h-8 items-center">{it.icon}</div>
                    <div className="flex flex-col items-center pl-px pt-1">
                      {it.lines.map((l) => (
                        <span key={l} className="block h-[17px] leading-[17px]">
                          <T s={l} />
                        </span>
                      ))}
                      {it.current && <Underline w="w-[66px]" />}
                    </div>
                  </div>
                ))}
              </div>
            </div>
          ))}
        </div>
        <div className="flex w-[17px] flex-col items-center bg-[#cfcbc8] pt-[3px]">
          <Chev dir="u" c="#777" w={11} />
          <div className="mt-0.5 w-[13px] flex-1 rounded bg-[#aaa19d]">
            <div className="h-[201px] w-[13px] rounded-[3px] border-2 border-[#7e7875] bg-gradient-to-r from-[#e4e2e1] to-[#cbc6c3]" />
          </div>
        </div>
      </div>
      <div className="h-1 shrink-0 bg-[#bdb6b2]" />
    </div>
  );
}

/* ---------- file manager ---------- */

const folders = ["ダウンロード", "デスクトップ", "テンプレート", "ドキュメント", "ビデオ", "音楽", "画像", "公開"];

function Place({ icon, label, sel = false }: { icon: React.ReactNode; label: string; sel?: boolean }) {
  return (
    <div className="flex h-[21px] items-center overflow-hidden pl-[6px]">
      <span className="flex w-[19px] shrink-0 justify-start">{icon}</span>
      <span
        className={
          "flex h-[21px] flex-1 items-center overflow-hidden pl-px " +
          (sel ? "border-y border-[#83bde4] bg-gradient-to-b from-[#b7def9] to-[#8fc5ee] underline decoration-[#e6f4fd] underline-offset-2" : "")
        }
      >
        <T s={label} className="-mt-px" />
      </span>
    </div>
  );
}

function Dolphin() {
  return (
    <div className="absolute left-[646px] top-[406px] flex h-[354px] w-[636px] flex-col overflow-hidden rounded-md bg-[radial-gradient(ellipse_380px_80px_at_50%_0,#fbfbfb,rgba(240,239,238,0)),linear-gradient(#e4e2e1,#dad7d5_70px,#c2bab6_240px)] text-[#222] shadow-[0_0_6px_rgba(0,0,20,.6),inset_1px_1px_0_#f4f3f2]">
      <div className="h-px shrink-0" />
      <TitleBar title="study - Dolphin" pr="pr-[8px]" />
      <div className="-mt-px flex h-[30px] shrink-0 items-center">
        <div className="flex w-[66px] items-center gap-2.5 pl-[6px] opacity-80">
          <Arrow />
          <Arrow flip />
        </div>
        <span className="h-6 w-px bg-[#b7b4b2]" />
        <div className="ml-[3px] flex h-[27px] w-[28px] items-center justify-center rounded border border-[#8f8c8a] bg-[#cbc8c6] shadow-[inset_0_1px_2px_#8d8a88]">
          <ViewIcon kind={0} />
        </div>
        <div className="ml-[6px]">
          <ViewIcon kind={1} />
        </div>
        <div className="ml-[9px]">
          <ViewIcon kind={2} />
        </div>
        <span className="ml-2 h-6 w-px bg-[#b7b4b2]" />
        <div className="flex w-[82px] items-center gap-[4px] pl-[7px]">
          <Binoculars s={22} />
          <T s="検索" className="-mt-px" />
        </div>
        <div className="flex w-[114px] items-center gap-[4px]">
          <Preview />
          <T s="プレビュー" className="-mt-px" />
        </div>
        <div className="flex w-[75px] items-center gap-1">
          <Split />
          <T s="分割" className="-mt-px" />
        </div>
        <div className="flex w-[117px] items-center gap-[3px]">
          <Gear s={23} />
          <T s="コントロール" className="-mt-px" />
        </div>
        <div className="pt-4">
          <Chev c="#222" w={9} />
        </div>
      </div>
      <div className="flex h-[298px] shrink-0">
        <div className="ml-px mt-0.5 flex h-[295px] w-[167px] flex-col rounded border border-[#cbc6c3] pt-px">
          <div className="flex h-[20px] items-center pb-0.5 pl-[5px] text-[#716c69]">
            <T s="Places" />
          </div>
          <div className="pt-1">
            <Place sel icon={<SmallFolder />} label="ホーム" />
            <Place icon={<Globe s={15} />} label="ネットワーク" />
            <Place icon={<SmallFolder red />} label="ルート" />
            <Place icon={<Trash />} label="ごみ箱" />
          </div>
          <div className="mt-[8px] flex h-[20px] items-center pl-[5px] text-[#716c69]">
            <T s="デバイス" />
          </div>
          <div className="pt-[5px]">
            <Place icon={<Disk />} label="50.0 GiB のハードディスク" />
            <Place icon={<Disk />} label="27.4 GiB のハードディスク" />
            <Place icon={<Disk />} label="500.0 MiB のハードディスク" />
          </div>
          <div className="mb-[3px] mt-auto flex h-[14px] items-center pl-1">
            <Chev dir="l" c="#8d8784" />
            <div className="ml-0.5 h-[13px] w-[118px] rounded border border-[#8a827e] bg-[#a59c98]">
              <div className="h-[11px] w-[71px] rounded-[3px] border-r border-[#7b7471] bg-gradient-to-b from-[#ecebea] to-[#d2cfcd]" />
            </div>
            <span className="w-0.5" />
            <Chev dir="l" c="#8d8784" />
            <span className="w-[3px]" />
            <Chev dir="r" c="#222" w={11} />
          </div>
        </div>
        <div className="flex w-[5px] items-center justify-center">
          <span className="h-3 border-l border-dotted border-[#777]" />
        </div>
        <div className="flex flex-1 flex-col">
          <div className="flex h-[30px] items-center gap-[5px] pb-1">
            <Chev dir="r" c="#222" w={11} />
            <span className="-mt-px font-medium text-black">
              <T s="ホーム" size={13.5} />
            </span>
          </div>
          <div className="ml-px grid h-[243px] w-[458px] shrink-0 grid-cols-[142px_143px_142px] content-start rounded border border-[#a29c99] border-t-[#85807d] bg-white pl-[16px] pt-[10px]">
            {folders.map((f, i) => (
              <div key={f} className="flex h-[63px] flex-col items-center">
                <Folder />
                <span className="mt-[3px] block h-[18px] leading-[18px]">
                  <T s={f} />
                </span>
                {i === 0 && (
                  <span className="pt-px">
                    <Underline w="w-[80px]" />
                  </span>
                )}
              </div>
            ))}
          </div>
          <div className="-ml-px flex h-[25px] items-center pr-[8px]">
            <T s="8 フォルダ" className="-mt-px" />
            <div className="ml-auto flex h-4 w-[138px] items-center">
              <div className="flex h-1 w-full items-center rounded bg-[#a09794] shadow-[0_1px_0_#e6e2e0]">
                <span className="ml-[13px] h-[15px] w-[15px] rounded-full border border-[#8a8582] bg-gradient-to-b from-[#f8f8f8] to-[#c8c5c3]" />
              </div>
            </div>
          </div>
        </div>
      </div>
    </div>
  );
}

/* ---------- desktop ---------- */

function Wallpaper() {
  return (
    <svg width="1280" height="800" viewBox="0 0 1280 800" className="absolute inset-0 block">
      <defs>
        <linearGradient id="wBase" x1="0" y1="0" x2="0" y2="1">
          <stop offset="0" stopColor="#000205" />
          <stop offset=".06" stopColor="#000a18" />
          <stop offset=".15" stopColor="#001f42" />
          <stop offset=".33" stopColor="#00549e" />
          <stop offset=".6" stopColor="#0767c6" />
          <stop offset=".8" stopColor="#0555a4" />
          <stop offset=".92" stopColor="#16184f" />
          <stop offset="1" stopColor="#1b0b40" />
        </linearGradient>
        <linearGradient id="wLeft" gradientUnits="userSpaceOnUse" x1="0" y1="60" x2="480" y2="260">
          <stop offset="0" stopColor="#001214" />
          <stop offset=".35" stopColor="#002e3a" stopOpacity=".97" />
          <stop offset=".65" stopColor="#003450" stopOpacity=".65" />
          <stop offset="1" stopColor="#003050" stopOpacity="0" />
        </linearGradient>
        <linearGradient id="wRight" x1="0" y1="0" x2="1" y2="0">
          <stop offset="0" stopColor="#00081e" stopOpacity="0" />
          <stop offset="1" stopColor="#00081e" stopOpacity=".72" />
        </linearGradient>
        <radialGradient id="wGlow">
          <stop offset="0" stopColor="#0c706d" />
          <stop offset=".25" stopColor="#0a6664" stopOpacity=".9" />
          <stop offset=".55" stopColor="#075052" stopOpacity=".55" />
          <stop offset=".8" stopColor="#053c40" stopOpacity=".18" />
          <stop offset="1" stopColor="#053c40" stopOpacity="0" />
        </radialGradient>
        <radialGradient id="wHaze">
          <stop offset="0" stopColor="#064548" stopOpacity=".95" />
          <stop offset=".5" stopColor="#05393e" stopOpacity=".6" />
          <stop offset="1" stopColor="#042c34" stopOpacity="0" />
        </radialGradient>
        <linearGradient id="wFoot" x1="0" y1="0" x2="1" y2="0">
          <stop offset="0" stopColor="#141c58" />
          <stop offset=".3" stopColor="#2a0c58" />
          <stop offset=".6" stopColor="#22083e" />
          <stop offset=".8" stopColor="#030106" />
          <stop offset="1" stopColor="#000" />
        </linearGradient>
        <filter id="wSoft" x="-50%" y="-50%" width="200%" height="200%">
          <feGaussianBlur stdDeviation="26" />
        </filter>
      </defs>
      <rect width="1280" height="800" fill="url(#wBase)" />
      <rect width="640" height="400" fill="url(#wLeft)" />
      <rect x="600" width="680" height="800" fill="url(#wRight)" />
      <ellipse cx="210" cy="110" rx="290" ry="170" transform="rotate(-30 210 110)" fill="url(#wHaze)" />
      <ellipse cx="120" cy="135" rx="230" ry="125" transform="rotate(-42 120 135)" fill="url(#wGlow)" />
      <ellipse cx="70" cy="210" rx="110" ry="130" fill="url(#wHaze)" opacity=".8" />
      <path d="M-80-80h270C120-10 50 40 5 140l-85 60z" fill="#000" filter="url(#wSoft)" />
      <path d="M-80 100h70c-4 60-4 120 0 180h-70z" fill="#001414" filter="url(#wSoft)" />
      <path d="M322 262c8-40 14-70 24-100l148-50v150z" fill="#0a5aa8" opacity=".08" />
      <path d="M365 85c13 30 25 60 37 100l93 10V60z" fill="#00081a" opacity=".12" />
      <path d="M465 480c10-8 20-12 30-14v134c-12 4-22 10-30 18z" fill="#1b86e8" opacity=".3" />
      <path d="M1214 130c20-8 45-22 66-40v310h-66z" fill="#0a3a76" opacity=".28" />
      <path d="M1214 340l66 60v8h-66z" fill="#000418" opacity=".45" />
      <path d="M465 690c60-20 120-40 181-52v-32c-60 4-120 14-181 34z" fill="#0a68c0" opacity=".25" />
      <rect x="465" y="756" width="815" height="20" fill="url(#wFoot)" />
    </svg>
  );
}

function Taskbar() {
  return (
    <div className="absolute left-0 top-[773px] flex h-[27px] w-[1280px] items-center border-t border-[#a2a2a2] bg-[#efefef] pt-[3px] text-[#111]">
      <div className="flex w-[68px] items-center gap-2 pl-[3px]">
        <Pinwheel />
        <svg width="21" height="7" viewBox="0 0 21 7" className="block">
          <circle cx="3.300" cy="3.500" r="3" fill="#c9302a" />
          <circle cx="10.300" cy="3.500" r="3" fill="#2b6cc4" />
          <circle cx="17.300" cy="3.500" r="3" fill="#6aa62c" />
        </svg>
      </div>
      <div className="flex w-[185px] items-center gap-1">
        <Cabinet />
        <T s="study - Dolphin" cell={6} size={12} />
      </div>
      <div className="flex items-center gap-[3px]">
        <Tools s={16} />
        <T s="KDE システム設定" cell={6} size={12} />
      </div>
      <div className="ml-auto flex items-center">
        <svg width="22" height="20" viewBox="0 0 22 20" className="block">
          <path d="M10 2c3-2 4 1 7 0s4 0 4 2" stroke="#5f8fbe" fill="none" strokeWidth="1.200" />
          <path d="M3 6h18v8H3z" fill="#dadad8" stroke="#8b8b89" />
          <path d="M5 8.500h15M5 11h15" stroke="#888" strokeDasharray="1 1" />
          <circle cx="6" cy="14" r="5" fill="#2c66a8" stroke="#345" strokeWidth=".5" />
          <path d="M3 12l4-1 2 3-3 4-2-2z" fill="#59b04a" />
        </svg>
        <svg width="18" height="20" viewBox="0 0 18 20" className="ml-[8px] block">
          <path d="M4 2l7 10M14 2L7 12" stroke="#909090" strokeWidth="3.400" />
          <path d="M4 2l7 10M14 2L7 12" stroke="#fff" strokeWidth="1.600" />
          <circle cx="5" cy="15" r="3" fill="#fff" stroke="#909090" strokeWidth="1.300" />
          <circle cx="13" cy="15" r="3" fill="#fff" stroke="#909090" strokeWidth="1.300" />
        </svg>
        <span className="ml-[11px] font-bold">
          <T s="jp" size={14} cell={7.5} />
        </span>
        <svg width="24" height="20" viewBox="0 0 24 20" className="ml-[9px] block">
          <path d="M1 7.500h3L9 3v14l-5-4.500H1z" fill="#f6f6f6" stroke="#909090" />
          <path d="M11.500 6q3 4 0 8M14.500 4q4.500 6 0 12M17.500 2q6 8 0 16" stroke="#999" strokeWidth="1.500" fill="none" />
        </svg>
        <svg width="13" height="14" viewBox="0 0 13 14" className="ml-[3px] block">
          <path d="M.5.5h12v13H.5z" fill="#fafafa" stroke="#bbb" />
          <path d="M2 5.500l4.500-3.500L11 5.500V11H2z" fill="#222" />
        </svg>
        <svg width="9" height="7" viewBox="0 0 9 7" className="ml-[14px] block">
          <path d="M1 5.500L4.500 1 8 5.500z" fill="#fff" stroke="#aaa" />
        </svg>
        <span className="ml-[10px] leading-[20px] text-[#fbfbfb] [-webkit-text-stroke:0.7px_#929292]">
          <T s="21:34" size={18.5} cell={10} className="-mt-0.5" />
        </span>
        <div className="ml-1 w-[21px] overflow-hidden">
          <svg width="26" height="26" viewBox="0 0 26 26" className="block">
            <circle cx="13" cy="13" r="12" fill="#e7e7e7" stroke="#bbb" />
            <path d="M15 7c-7-1-9 4-8 8s8 5 11 1c-3 0-6-1-6-4s1-4 3-5z" fill="#cfcfcf" stroke="#b5b5b5" strokeWidth=".6" />
          </svg>
        </div>
      </div>
    </div>
  );
}

export default function App() {
  return (
    <div className="relative h-[800px] w-[1280px] overflow-hidden bg-black font-['Noto_Sans_CJK_JP',sans-serif] text-[13px] leading-[18px] font-[350]">
      <Defs />
      <Wallpaper />
      <div className="absolute left-[1167px] top-0 flex h-[27px] w-[104px] items-center rounded-b border border-t-0 border-[#a9b4bf] bg-[#8e9aa6] pl-[5px] text-black">
        <svg width="14" height="16" viewBox="0 0 14 16" className="-mt-1 block">
          <path d="M8 2C2 2 0 7 2 11s8 5 10 1c-3 1-6 0-6-4 0-3 1-5 2-6z" fill="#b9c0c7" />
          <path d="M8 2h1M11 3h1" stroke="#c5cbd1" strokeWidth="1.500" />
        </svg>
        <span className="ml-2">
          <T s="Desktop" />
        </span>
      </div>
      <Launcher />
      <Settings />
      <Dolphin />
      <Taskbar />
    </div>
  );
}
